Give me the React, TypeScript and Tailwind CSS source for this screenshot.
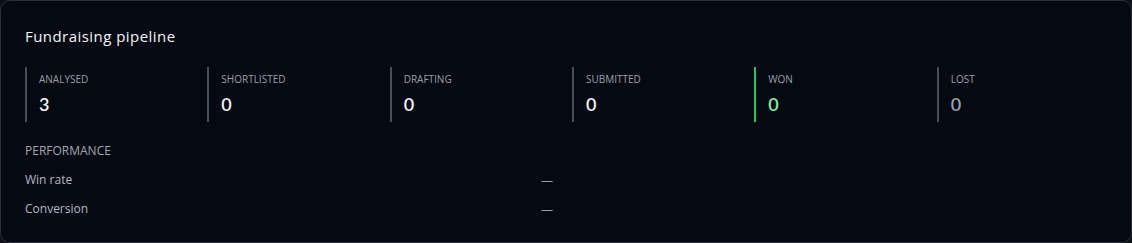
import React from "react";

const stats = [
  { label: "ANALYSED", value: "3", border: "border-[#4a4f57]", color: "text-[#f3f4f6]" },
  { label: "SHORTLISTED", value: "0", border: "border-[#4a4f57]", color: "text-[#f3f4f6]" },
  { label: "DRAFTING", value: "0", border: "border-[#4a4f57]", color: "text-[#f3f4f6]" },
  { label: "SUBMITTED", value: "0", border: "border-[#4a4f57]", color: "text-[#f3f4f6]" },
  { label: "WON", value: "0", border: "border-[#22c55e]", color: "text-[#86efac]" },
  { label: "LOST", value: "0", border: "border-[#4a4f57]", color: "text-[#9ca3af]" },
];

export default function App() {
  return (
    <div className="w-[1132px] h-[243px] bg-[#0d1117]">
      <div className="w-full h-full rounded-[10px] border border-[#2b313b] bg-[#050912] px-6 pt-[25px] pb-6 font-['Open_Sans',sans-serif]">
        <h2 className="font-['Open_Sans',sans-serif] font-medium text-[15px] tracking-[0.45px] leading-[20px] text-[#f3f4f6]">
          Fundraising pipeline
        </h2>
        <div className="mt-[21px] grid grid-cols-6 gap-3">
          {stats.map((s) => (
            <div key={s.label} className={`border-l-2 ${s.border} pl-3 pt-[5px] pb-[6px] h-[55px]`}>
              <div className="text-[10px] leading-[14px] text-[#9aa0a8]">{s.label}</div>
              <div className={`mt-[6px] font-['Lato',sans-serif] font-semibold text-[18px] leading-[24px] ${s.color}`}>
                {s.value}
              </div>
            </div>
          ))}
        </div>
        <div className="mt-[21px] text-[12px] leading-[16px] text-[#a3a8b0]">PERFORMANCE</div>
        <div className="mt-[13px] w-[528px] flex justify-between text-[12px] leading-[16px]">
          <span className="text-[#b4b9c1]">Win rate</span>
          <span className="text-[#9ca3af] translate-y-[1px]">—</span>
        </div>
        <div className="mt-[13px] w-[528px] flex justify-between text-[12px] leading-[16px]">
          <span className="text-[#b4b9c1]">Conversion</span>
          <span className="text-[#9ca3af] translate-y-[1px]">—</span>
        </div>
      </div>
    </div>
  );
}
